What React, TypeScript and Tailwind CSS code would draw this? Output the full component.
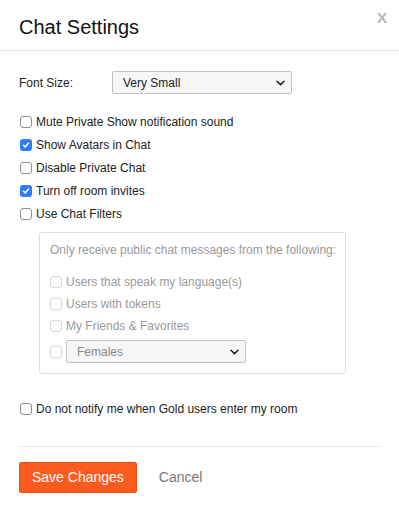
function Box({ checked = false, disabled = false }: { checked?: boolean; disabled?: boolean }) {
  if (checked) {
    return (
      <span className="flex h-[12px] w-[12px] shrink-0 items-center justify-center rounded-[3px] bg-[#2f7cf6]">
        <svg width="8" height="8" viewBox="0 0 8 8" fill="none">
          <path d="M1.5 4.2 L3.2 5.9 L6.5 2" stroke="white" strokeWidth="1.5" strokeLinecap="round" strokeLinejoin="round" />
        </svg>
      </span>
    );
  }
  return (
    <span
      className={
        disabled
          ? "h-[12px] w-[12px] shrink-0 rounded-[3px] border border-[#d4d4d4] bg-white"
          : "h-[12px] w-[12px] shrink-0 rounded-[3px] border border-[#8f8f8f] bg-white"
      }
    />
  );
}

function Chevron() {
  return (
    <svg width="9" height="6" viewBox="0 0 9 6" fill="none">
      <path d="M1 1.2 L4.5 4.6 L8 1.2" stroke="#222" strokeWidth="1.5" strokeLinecap="round" strokeLinejoin="round" />
    </svg>
  );
}

function Select({ value, muted = false }: { value: string; muted?: boolean }) {
  return (
    <div className="flex h-[23px] w-[180px] items-center justify-between rounded-[2px] border border-[#c2c2c2] bg-[#f6f6f6] pl-[10px] pr-[6px]">
      <span className={muted ? "text-[12px] text-[#8a8a8a]" : "text-[12px] text-[#222]"}>{value}</span>
      <Chevron />
    </div>
  );
}

function Row({ label, checked }: { label: string; checked?: boolean }) {
  return (
    <div className="flex h-[23px] items-center gap-[4px] pl-[1px]">
      <Box checked={checked} />
      <span className="text-[12px] text-[#222]">{label}</span>
    </div>
  );
}

function SubRow({ label }: { label: string }) {
  return (
    <div className="flex h-[22px] items-center gap-[4px]">
      <Box disabled />
      <span className="text-[12px] text-[#999]">{label}</span>
    </div>
  );
}

export default function App() {
  return (
    <div className="relative min-h-[513px] w-[399px] bg-white font-[family-name:Liberation_Sans,Arial,sans-serif] text-[#222]">
      <div className="h-[51px] border-b border-[#e4e4e4] px-[19px] pt-[15px]">
        <h1 className="text-[20px] leading-[24px] text-[#111]">Chat Settings</h1>
      </div>
      <span className="absolute right-[12px] top-[7px] text-[15px] font-bold text-[#b3b3b3]">X</span>

      <div className="px-[19px] pt-[20px]">
        <div className="flex items-center">
          <span className="w-[93px] text-[12px]">Font Size:</span>
          <Select value="Very Small" />
        </div>

        <div className="mt-[16px]">
          <Row label="Mute Private Show notification sound" />
          <Row label="Show Avatars in Chat" checked />
          <Row label="Disable Private Chat" />
          <Row label="Turn off room invites" checked />
          <Row label="Use Chat Filters" />
        </div>

        <div className="ml-[20px] mt-[7px] h-[142px] w-[307px] rounded-[3px] border border-[#dedede] px-[10px] pt-[10px]">
          <p className="whitespace-nowrap text-[12px] leading-[14px] text-[#999]">
            Only receive public chat messages from the following:
          </p>
          <div className="mt-[14px]">
            <SubRow label="Users that speak my language(s)" />
            <SubRow label="Users with tokens" />
            <SubRow label="My Friends & Favorites" />
            <div className="mt-[3px] flex items-center gap-[4px]">
              <Box disabled />
              <Select value="Females" muted />
            </div>
          </div>
        </div>

        <div className="mt-[23px]">
          <Row label="Do not notify me when Gold users enter my room" />
        </div>

        <div className="mt-[26px] h-px bg-[#e4e4e4]" />

        <div className="mt-[15px] flex items-center gap-[22px]">
          <button className="h-[31px] rounded-[2px] border border-[#ec4f14] bg-[#fd5a1f] px-[12px] text-[14px] text-white">
            Save Changes
          </button>
          <button className="text-[14px] text-[#777]">Cancel</button>
        </div>
      </div>
    </div>
  );
}
